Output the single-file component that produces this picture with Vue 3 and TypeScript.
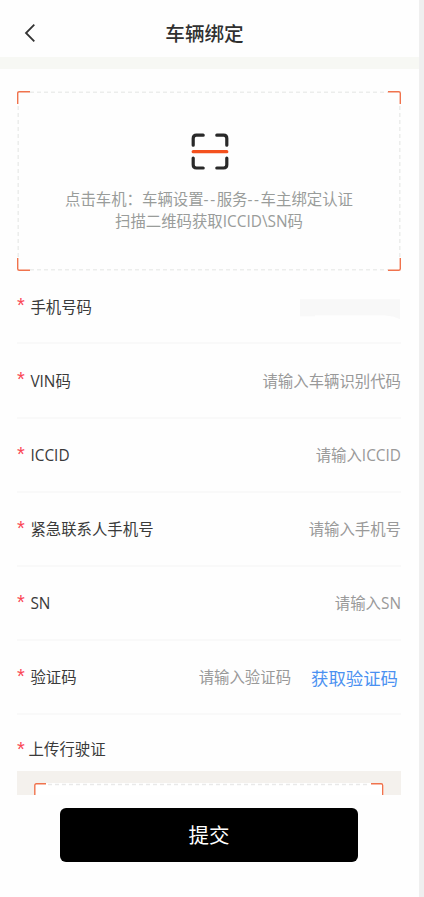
<script setup lang="ts">
interface Field {
  label: string
  placeholder: string
  masked?: boolean
  action?: string
}

const fields: Field[] = [
  { label: '手机号码', placeholder: '', masked: true },
  { label: 'VIN码', placeholder: '请输入车辆识别代码' },
  { label: 'ICCID', placeholder: '请输入ICCID' },
  { label: '紧急联系人手机号', placeholder: '请输入手机号' },
  { label: 'SN', placeholder: '请输入SN' },
  { label: '验证码', placeholder: '请输入验证码', action: '获取验证码' },
]
</script>

<template>
  <div class="screen">
    <main class="page">
      <header class="nav">
        <svg class="back" viewBox="0 0 12 20" width="12" height="20">
          <path d="M10.3 1.7 2 10l8.3 8.3" fill="none" stroke="#333" stroke-width="1.8" />
        </svg>
        <h1 class="title">车辆绑定</h1>
      </header>
      <div class="band"></div>

      <section class="scan">
        <svg class="frame" viewBox="0 0 384 180" width="384" height="180" fill="none">
          <path d="M13 1.2H371M13 178.8H371M1.2 15V167M382.8 15V167" stroke="#ecedec" stroke-width="1.5" stroke-dasharray="4 3" />
          <path d="M.7 13V2.2Q.7.7 2.2.7H13M371 .7H381.8Q383.3.7 383.3 2.2V13M.7 167V177.8Q.7 179.3 2.2 179.3H13M371 179.3H381.8Q383.3 179.3 383.3 177.8V167" stroke="#f0734d" stroke-width="1.4" />
        </svg>
        <svg class="scan-icon" viewBox="0 0 38 38" width="38" height="38" fill="none" stroke-linecap="round" stroke-width="3.2">
          <path d="M2.2 12.2V5.4Q2.2 2.2 5.4 2.2H12.2M25.8 2.2H32.6Q35.8 2.2 35.8 5.4V12.2M2.2 25V31.8Q2.2 35 5.4 35H12.2M25.8 35H32.6Q35.8 35 35.8 31.8V25" stroke="#292929" />
          <path d="M2.2 18.7H35.8" stroke="#f4511e" />
        </svg>
        <p class="hint">点击车机：车辆设置<span class="dash">--</span>服务<span class="dash">--</span>车主绑定认证<br />扫描二维码获取ICCID\SN码</p>
      </section>

      <section class="form">
        <div v-for="field in fields" :key="field.label" class="row">
          <span class="star">*</span>
          <span class="label">{{ field.label }}</span>
          <span v-if="field.masked" class="mask"></span>
          <span v-else class="placeholder">{{ field.placeholder }}</span>
          <span v-if="field.action" class="action">{{ field.action }}</span>
        </div>
      </section>

      <section class="upload">
        <div class="upload-title"><span class="star">*</span><span class="label">上传行驶证</span></div>
        <div class="upload-area">
          <svg class="upload-frame" viewBox="0 0 350 12" width="350" height="12" fill="none">
            <path d="M0 12V2.5Q0 0 2.5 0H347.5Q350 0 350 2.5V12Z" fill="#fff" />
            <path d="M14 1.5H336" stroke="#e9e9e9" stroke-width="1.5" stroke-dasharray="4 3" />
            <path d="M.8 12V2.3Q.8.8 2.3.8H12M337 .8H347.2Q348.7.8 348.7 2.3V12" stroke="#f0734d" stroke-width="1.4" />
          </svg>
        </div>
      </section>

      <footer class="bottom">
        <button class="submit" type="button">提交</button>
      </footer>
    </main>
    <div class="edge"></div>
  </div>
</template>

<style>
body {
  overflow: hidden;
  background: #fefefe;
}
</style>

<style scoped>
.screen {
  display: flex;
  width: 424px;
  height: 897px;
  overflow: hidden;
  font-family: 'Open Sans', 'Noto Sans CJK SC', sans-serif;
  font-size: 15.4px;
  color: #3a3a3a;
}
.page {
  width: 419px;
  background: #fefefe;
}
.edge {
  flex: 1;
  background: #efefef;
}
.nav {
  display: grid;
  grid-template-columns: 60px 1fr 75px;
  align-items: center;
  height: 57px;
  padding-top: 8px;
  box-sizing: border-box;
}
.back {
  margin-left: 24px;
}
.title {
  margin: 2px 0 0 11px;
  font-size: 19.6px;
  line-height: 28px;
  font-weight: 500;
  text-align: center;
  padding-right: 6px;
  color: #303030;
}
.band {
  height: 12px;
  background: #f7f8f4;
}
.scan {
  display: grid;
  grid-template-columns: 384px;
  grid-template-rows: 180px;
  margin: 22px 0 0 17px;
}
.frame,
.scan-icon,
.hint {
  grid-area: 1 / 1;
}
.scan-icon {
  margin: 42px 0 0 173.5px;
}
.hint {
  margin: 98px 0 0;
  text-align: center;
  line-height: 22.4px;
  color: #999c9a;
}
.dash {
  letter-spacing: 1.6px;
}
.form {
  margin: -0.7px 0 0 17px;
  width: 384px;
}
.row {
  display: flex;
  align-items: center;
  box-sizing: border-box;
  height: 74.1px;
  padding-top: 3px;
  border-bottom: 2px solid #f9f9f9;
}
.star {
  width: 13.4px;
  margin-bottom: 5px;
  color: #fa4655;
  font-family: 'Liberation Sans', sans-serif;
  font-size: 20px;
  line-height: 20px;
}
.label {
  flex: 1;
  line-height: 22px;
}
.placeholder {
  line-height: 22px;
  color: #999;
}
.action {
  margin-left: 20px;
  padding-right: 3px;
  font-size: 17.4px;
  line-height: 24px;
  color: #4b91f1;
}
.mask {
  width: 100px;
  height: 20px;
  margin: 3px 1px 0 0;
  background: #f8f8f8;
  clip-path: polygon(0 0, 100% 0, 100% 100%, 94% 87%, 84% 80%, 15% 80%, 15% 84%, 0 84%);
}
.upload {
  margin-left: 17px;
  width: 384px;
}
.upload-title {
  display: flex;
  align-items: center;
  height: 56.1px;
  padding-top: 14px;
  box-sizing: border-box;
}
.upload-title .star {
  width: 11.6px;
  margin-bottom: 2px;
}
.upload-area {
  display: flex;
  height: 24px;
  padding: 12px 0 0 17px;
  box-sizing: border-box;
  background: #f4f1ed;
}
.bottom {
  padding: 13px 0 0 60px;
}
.submit {
  display: block;
  width: 298px;
  height: 54px;
  padding: 0 0 2px;
  border: 0;
  border-radius: 6px;
  background: #000;
  color: #fff;
  font-family: inherit;
  font-size: 20.5px;
}
</style>
